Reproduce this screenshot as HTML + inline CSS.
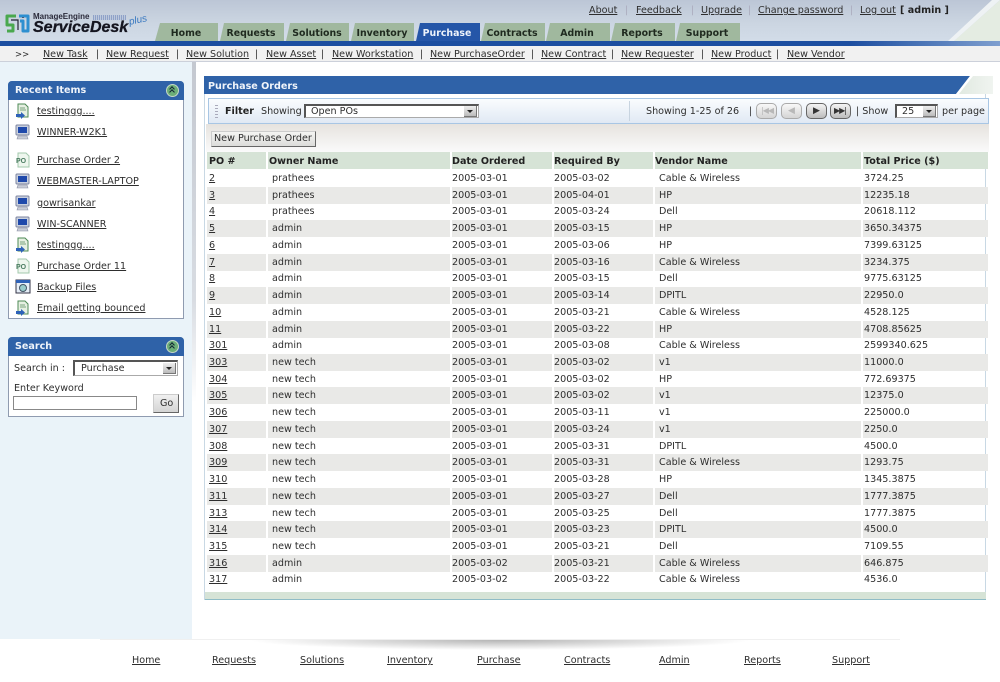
<!DOCTYPE html>
<html><head><meta charset="utf-8"><title>Purchase Orders</title>
<style>
html,body{margin:0;padding:0;background:#fff}
body{position:relative;width:1000px;height:682px;overflow:hidden;font:9.6px/14px "DejaVu Sans","Liberation Sans",sans-serif;color:#2e2e2e}
div,span,a,svg{position:absolute}
.t,a{white-space:nowrap}
a{color:#2e2e2e;text-decoration:underline}
b{font-weight:bold}
.tab{top:34px;transform:translate(-50%,-50%);font-weight:bold;color:#1f2a1f;font-size:9.4px}
.hd{font-weight:bold;color:#f0f4fa}
.r{left:207px;width:781px;height:17px}
.g{background:#e9e9e7}
.r span,.r a{top:2px}
.r a{left:2px}
.r span:nth-of-type(1){left:65px}
.r span:nth-of-type(2){left:245px}
.r span:nth-of-type(3){left:347px}
.r span:nth-of-type(4){left:452px}
.r span:nth-of-type(5){left:657px}
.th{top:155px;font-weight:bold;color:#222}
.sep{top:152px;width:2px;height:436px;background:#fff}
.sel{background:#fff;border:1px solid #aaa;border-top:2px solid #555;border-left:2px solid #555;box-sizing:border-box}
.arr{right:1px;top:1px;width:13px;height:11px;background:linear-gradient(#eee,#bbb);border-right:1px solid #777;border-bottom:1px solid #777;box-sizing:border-box}
.arr:after{content:"";position:absolute;left:3px;top:4px;border:3px solid transparent;border-top:3px solid #222;border-bottom:0}
.pg{top:103px;width:21px;height:16px;border:1px solid #aaa;border-radius:5px;background:linear-gradient(#f8f8f8,#d4d4d4);box-sizing:border-box}
.pg.on{border-color:#666;background:linear-gradient(#f4f4f4,#bcbcbc)}
.col{width:13px;height:13px;border-radius:50%;background:#6cae78;border:1px solid #c6d8c6;box-sizing:border-box}
.col:after{content:"";position:absolute;left:3px;top:2px;width:3px;height:3px;border-top:1px solid #123;border-left:1px solid #123;transform:rotate(45deg)}
.col:before{content:"";position:absolute;left:3px;top:5px;width:3px;height:3px;border-top:1px solid #123;border-left:1px solid #123;transform:rotate(45deg)}
</style></head><body>
<svg width="0" height="0" style="left:0;top:0"><defs>
<g id="tk"><path d="M3 1h7l3 3v10H3z" fill="#e6f0e2" stroke="#4e8a56"/><path d="M5 5h5M5 7h6" stroke="#7aa57e"/><path d="M1 11h5V9l4 3.500-4 3.500v-2H1z" fill="#2e62b8"/></g>
<g id="pc"><rect x="1" y="1" width="13" height="10" rx="1" fill="#c9d0de" stroke="#7e86a0"/><rect x="3" y="3" width="9" height="6" fill="#1f49ab"/><path d="M3 12h9l1 3H2z" fill="#c8ccd6" stroke="#8b90a4" stroke-width=".6"/></g>
<g id="po"><path d="M3 1h8l3 3v11H3z" fill="#eef6ee" stroke="#a3c8ac"/><text x="1" y="11" font-size="7" font-weight="bold" fill="#4d7d63" font-family="Liberation Sans">PO</text></g>
<g id="bk"><rect x="1" y="1" width="14" height="13" fill="#e6eef7" stroke="#334"/><rect x="1" y="1" width="14" height="3" fill="#2e62b8"/><circle cx="8" cy="9" r="3.500" fill="#9cc" stroke="#456"/></g>
</defs></svg>

<!-- header -->
<div style="left:0;top:0;width:1000px;height:41px;background:linear-gradient(#bcc6d6,#ccd6e2 60%,#d2dce8)"></div>
<svg style="left:940px;top:0" width="60" height="41"><polygon points="14,41 60,0 60,41" fill="#e4ece2"/><polygon points="14,41 60,0 52,0 8,41" fill="#eef2f4"/></svg>
<svg style="left:4px;top:13px" width="26" height="22"><path d="M12 3H3v9h6v6H3" fill="none" stroke="#4aa84e" stroke-width="3" stroke-linejoin="round"/><path d="M15 3h9v15h-5V8h-3" fill="none" stroke="#2d8fd0" stroke-width="3" stroke-linejoin="round"/><path d="M7 7h7v10M19 5v-1" stroke="#223" stroke-width="1.200" fill="none"/></svg>
<span class="t" style="left:33px;top:12px;font:bold 8px/10px 'Liberation Sans',sans-serif;color:#2a2a3a">ManageEngine</span>
<div style="left:93px;top:15px;width:33px;height:5px;background:repeating-linear-gradient(90deg,#8fa2c8 0 1px,#bcc8dc 1px 2px)"></div>
<span class="t" style="left:33px;top:20px;font:italic bold 16px/16px 'Liberation Sans',sans-serif;color:#15151f;-webkit-text-stroke:.3px #15151f">ServiceDesk</span>
<span class="t" style="left:129px;top:15px;font:italic 10px/12px 'Liberation Sans',sans-serif;color:#3878c0;transform:rotate(-12deg)">plus</span>

<a style="left:589px;top:4px">About</a><span class="t" style="left:625px;top:4px;color:#aab">|</span>
<a style="left:636px;top:4px">Feedback</a><span class="t" style="left:691px;top:4px;color:#aab">|</span>
<a style="left:701px;top:4px">Upgrade</a><span class="t" style="left:748px;top:4px;color:#aab">|</span>
<a style="left:758px;top:4px">Change password</a><span class="t" style="left:850px;top:4px;color:#aab">|</span>
<a style="left:860px;top:4px">Log out</a><span class="t" style="left:900px;top:4px;font-weight:bold;color:#222">[ admin ]</span>

<!-- tabs -->
<svg style="left:150px;top:22px" width="600" height="20">
<g fill="#a0b89e">
<polygon points="5,19 10,1 68,1 68,19"/><polygon points="70,19 74,1 134,1 134,19"/><polygon points="136,19 140,1 199,1 199,19"/><polygon points="201,19 205,1 264,1 264,19"/>
<polygon points="266,19 270,1 330,1 330,19" fill="#2556a8"/>
<polygon points="331,19 335,1 395,1 395,19"/><polygon points="396,19 400,1 460,1 460,19"/><polygon points="461,19 465,1 525,1 525,19"/><polygon points="526,19 530,1 590,1 590,19"/>
</g></svg>
<span class="t tab" style="left:186px">Home</span>
<span class="t tab" style="left:251px">Requests</span>
<span class="t tab" style="left:317px">Solutions</span>
<span class="t tab" style="left:382px">Inventory</span>
<span class="t tab" style="left:447px;color:#eef3fb">Purchase</span>
<span class="t tab" style="left:512px">Contracts</span>
<span class="t tab" style="left:577px">Admin</span>
<span class="t tab" style="left:642px">Reports</span>
<span class="t tab" style="left:707px">Support</span>

<div style="left:0;top:41px;width:1000px;height:5px;background:linear-gradient(90deg,#1c4ea0 0,#1c4ea0 85%,#7f9fcf)"></div>
<div style="left:0;top:46px;width:1000px;height:16px;background:#f1f1f1;border-bottom:1px solid #ccd0da;box-sizing:border-box"></div>
<span class="t" style="left:15px;top:48px;font-size:8.5px">&gt;&gt;</span>
<a style="left:43px;top:48px">New Task</a><span class="t" style="left:96px;top:48px">|</span>
<a style="left:106px;top:48px">New Request</a><span class="t" style="left:176px;top:48px">|</span>
<a style="left:186px;top:48px">New Solution</a><span class="t" style="left:255px;top:48px">|</span>
<a style="left:266px;top:48px">New Asset</a><span class="t" style="left:321px;top:48px">|</span>
<a style="left:332px;top:48px">New Workstation</a><span class="t" style="left:420px;top:48px">|</span>
<a style="left:430px;top:48px">New PurchaseOrder</a><span class="t" style="left:531px;top:48px">|</span>
<a style="left:541px;top:48px">New Contract</a><span class="t" style="left:611px;top:48px">|</span>
<a style="left:621px;top:48px">New Requester</a><span class="t" style="left:701px;top:48px">|</span>
<a style="left:711px;top:48px">New Product</a><span class="t" style="left:776px;top:48px">|</span>
<a style="left:787px;top:48px">New Vendor</a>

<!-- sidebar -->
<div style="left:0;top:62px;width:192px;height:577px;background:#eaf3f9"></div>
<div style="left:192px;top:62px;width:4px;height:340px;background:linear-gradient(#c4c8d0,#d8dce2 70%,#fff)"></div>

<div style="left:8px;top:81px;width:176px;height:238px;background:#fff;border:1px solid #8f9bb0;box-sizing:border-box;border-radius:4px 4px 0 0"></div>
<div style="left:8px;top:81px;width:176px;height:19px;background:#2f62a8;border-radius:4px 4px 0 0"></div>
<span class="t hd" style="left:15px;top:84px">Recent Items</span>
<div class="col" style="left:166px;top:84px"></div>
<svg style="left:15px;top:103px" width="16" height="17"><use href="#tk"/></svg><a style="left:37px;top:105px">testinggg....</a>
<svg style="left:15px;top:124px" width="16" height="17"><use href="#pc"/></svg><a style="left:37px;top:126px">WINNER-W2K1</a>
<svg style="left:15px;top:152px" width="16" height="17"><use href="#po"/></svg><a style="left:37px;top:154px">Purchase Order 2</a>
<svg style="left:15px;top:173px" width="16" height="17"><use href="#pc"/></svg><a style="left:37px;top:175px">WEBMASTER-LAPTOP</a>
<svg style="left:15px;top:195px" width="16" height="17"><use href="#pc"/></svg><a style="left:37px;top:197px">gowrisankar</a>
<svg style="left:15px;top:216px" width="16" height="17"><use href="#pc"/></svg><a style="left:37px;top:218px">WIN-SCANNER</a>
<svg style="left:15px;top:237px" width="16" height="17"><use href="#tk"/></svg><a style="left:37px;top:239px">testinggg....</a>
<svg style="left:15px;top:258px" width="16" height="17"><use href="#po"/></svg><a style="left:37px;top:260px">Purchase Order 11</a>
<svg style="left:15px;top:279px" width="16" height="17"><use href="#bk"/></svg><a style="left:37px;top:281px">Backup Files</a>
<svg style="left:15px;top:300px" width="16" height="17"><use href="#tk"/></svg><a style="left:37px;top:302px">Email getting bounced</a>

<div style="left:8px;top:337px;width:176px;height:80px;background:#fff;border:1px solid #8f9bb0;box-sizing:border-box;border-radius:4px 4px 0 0"></div>
<div style="left:8px;top:337px;width:176px;height:19px;background:#2f62a8;border-radius:4px 4px 0 0"></div>
<span class="t hd" style="left:15px;top:340px">Search</span>
<div class="col" style="left:166px;top:340px"></div>
<span class="t" style="left:14px;top:362px">Search in :</span>
<div class="sel" style="left:73px;top:360px;width:105px;height:16px"><span class="t" style="left:6px;top:0">Purchase</span><div class="arr"></div></div>
<span class="t" style="left:14px;top:382px">Enter Keyword</span>
<div style="left:13px;top:396px;width:124px;height:14px;background:#fff;border:1px solid #888;box-sizing:border-box"></div>
<div style="left:153px;top:394px;width:26px;height:19px;background:linear-gradient(#f0f0f0,#d4d4d4);border:1px solid #ccc;border-right-color:#666;border-bottom-color:#666;box-sizing:border-box"><span class="t" style="left:6px;top:2px">Go</span></div>

<!-- main panel -->
<div style="left:204px;top:76px;width:782px;height:524px;background:#fff;border:1px solid #c8d8e4;border-top:0;box-sizing:border-box"></div>
<div style="left:955px;top:76px;width:38px;height:18px;background:linear-gradient(90deg,#dfe8df,#f0f4f0)"></div>
<svg style="left:204px;top:76px" width="790" height="19"><polygon points="0,0 766,0 752,18 0,18" fill="#2f62a8"/><polygon points="766,0 752,18 755,18 769,0" fill="#fff"/></svg>
<span class="t hd" style="left:208px;top:80px">Purchase Orders</span>
<div style="left:208px;top:98px;width:781px;height:26px;background:linear-gradient(#fafcfe,#e0e9f4);border:1px solid #a8c6e4;box-sizing:border-box"></div>
<div style="left:215px;top:105px;width:3px;height:13px;background:repeating-linear-gradient(#aab 0 1px,transparent 1px 3px)"></div>
<span class="t" style="left:225px;top:105px;font-weight:bold;color:#222">Filter</span>
<span class="t" style="left:261px;top:105px">Showing</span>
<div class="sel" style="left:304px;top:104px;width:175px;height:14px"><span class="t" style="left:5px;top:-1px">Open POs</span><div class="arr" style="top:0"></div></div>
<div style="left:629px;top:101px;width:1px;height:20px;background:#c8d4e0"></div>
<span class="t" style="left:646px;top:105px">Showing 1-25 of 26</span>
<span class="t" style="left:749px;top:105px">|</span>
<div class="pg" style="left:756px"><span class="t" style="left:4px;top:0;font-size:8px;color:#b8b8b8;letter-spacing:-1px">|◀◀</span></div>
<div class="pg" style="left:781px"><span class="t" style="left:6px;top:0;font-size:9px;color:#b8b8b8">◀</span></div>
<div class="pg on" style="left:806px"><span class="t" style="left:6px;top:0;font-size:9px;color:#333">▶</span></div>
<div class="pg on" style="left:830px"><span class="t" style="left:3px;top:0;font-size:8px;color:#333;letter-spacing:-1px">▶▶|</span></div>
<span class="t" style="left:856px;top:105px">| Show</span>
<div class="sel" style="left:895px;top:104px;width:43px;height:14px"><span class="t" style="left:5px;top:-1px">25</span><div class="arr" style="top:0"></div></div>
<span class="t" style="left:942px;top:105px">per page</span>
<div style="left:206px;top:124px;width:783px;height:28px;background:linear-gradient(#e6e3de,#fafafa)"></div>
<div style="left:211px;top:131px;width:105px;height:16px;background:linear-gradient(#f4f4f2,#dcdcda);border:1px solid #ccc;border-right-color:#666;border-bottom-color:#666;box-sizing:border-box"><span class="t" style="left:2px;top:0">New Purchase Order</span></div>

<div style="left:207px;top:152px;width:781px;height:17px;background:#d6e3d6"></div>
<span class="t th" style="left:209px">PO #</span>
<span class="t th" style="left:269px">Owner Name</span>
<span class="t th" style="left:452px">Date Ordered</span>
<span class="t th" style="left:554px">Required By</span>
<span class="t th" style="left:655px">Vendor Name</span>
<span class="t th" style="left:864px">Total Price ($)</span>

<div class="r" style="top:170px"><a>2</a><span>prathees</span><span>2005-03-01</span><span>2005-03-02</span><span>Cable &amp; Wireless</span><span>3724.25</span></div>
<div class="r g" style="top:187px"><a>3</a><span>prathees</span><span>2005-03-01</span><span>2005-04-01</span><span>HP</span><span>12235.18</span></div>
<div class="r" style="top:203px"><a>4</a><span>prathees</span><span>2005-03-01</span><span>2005-03-24</span><span>Dell</span><span>20618.112</span></div>
<div class="r g" style="top:220px"><a>5</a><span>admin</span><span>2005-03-01</span><span>2005-03-15</span><span>HP</span><span>3650.34375</span></div>
<div class="r" style="top:237px"><a>6</a><span>admin</span><span>2005-03-01</span><span>2005-03-06</span><span>HP</span><span>7399.63125</span></div>
<div class="r g" style="top:254px"><a>7</a><span>admin</span><span>2005-03-01</span><span>2005-03-16</span><span>Cable &amp; Wireless</span><span>3234.375</span></div>
<div class="r" style="top:270px"><a>8</a><span>admin</span><span>2005-03-01</span><span>2005-03-15</span><span>Dell</span><span>9775.63125</span></div>
<div class="r g" style="top:287px"><a>9</a><span>admin</span><span>2005-03-01</span><span>2005-03-14</span><span>DPITL</span><span>22950.0</span></div>
<div class="r" style="top:304px"><a>10</a><span>admin</span><span>2005-03-01</span><span>2005-03-21</span><span>Cable &amp; Wireless</span><span>4528.125</span></div>
<div class="r g" style="top:321px"><a>11</a><span>admin</span><span>2005-03-01</span><span>2005-03-22</span><span>HP</span><span>4708.85625</span></div>
<div class="r" style="top:337px"><a>301</a><span>admin</span><span>2005-03-01</span><span>2005-03-08</span><span>Cable &amp; Wireless</span><span>2599340.625</span></div>
<div class="r g" style="top:354px"><a>303</a><span>new tech</span><span>2005-03-01</span><span>2005-03-02</span><span>v1</span><span>11000.0</span></div>
<div class="r" style="top:371px"><a>304</a><span>new tech</span><span>2005-03-01</span><span>2005-03-02</span><span>HP</span><span>772.69375</span></div>
<div class="r g" style="top:387px"><a>305</a><span>new tech</span><span>2005-03-01</span><span>2005-03-02</span><span>v1</span><span>12375.0</span></div>
<div class="r" style="top:404px"><a>306</a><span>new tech</span><span>2005-03-01</span><span>2005-03-11</span><span>v1</span><span>225000.0</span></div>
<div class="r g" style="top:421px"><a>307</a><span>new tech</span><span>2005-03-01</span><span>2005-03-24</span><span>v1</span><span>2250.0</span></div>
<div class="r" style="top:438px"><a>308</a><span>new tech</span><span>2005-03-01</span><span>2005-03-31</span><span>DPITL</span><span>4500.0</span></div>
<div class="r g" style="top:454px"><a>309</a><span>new tech</span><span>2005-03-01</span><span>2005-03-31</span><span>Cable &amp; Wireless</span><span>1293.75</span></div>
<div class="r" style="top:471px"><a>310</a><span>new tech</span><span>2005-03-01</span><span>2005-03-28</span><span>HP</span><span>1345.3875</span></div>
<div class="r g" style="top:488px"><a>311</a><span>new tech</span><span>2005-03-01</span><span>2005-03-27</span><span>Dell</span><span>1777.3875</span></div>
<div class="r" style="top:505px"><a>313</a><span>new tech</span><span>2005-03-01</span><span>2005-03-25</span><span>Dell</span><span>1777.3875</span></div>
<div class="r g" style="top:521px"><a>314</a><span>new tech</span><span>2005-03-01</span><span>2005-03-23</span><span>DPITL</span><span>4500.0</span></div>
<div class="r" style="top:538px"><a>315</a><span>new tech</span><span>2005-03-01</span><span>2005-03-21</span><span>Dell</span><span>7109.55</span></div>
<div class="r g" style="top:555px"><a>316</a><span>admin</span><span>2005-03-02</span><span>2005-03-21</span><span>Cable &amp; Wireless</span><span>646.875</span></div>
<div class="r" style="top:571px"><a>317</a><span>admin</span><span>2005-03-02</span><span>2005-03-22</span><span>Cable &amp; Wireless</span><span>4536.0</span></div>

<div class="sep" style="left:266px"></div><div class="sep" style="left:450px"></div><div class="sep" style="left:552px"></div><div class="sep" style="left:653px"></div><div class="sep" style="left:861px"></div>

<div style="left:205px;top:592px;width:781px;height:8px;background:#d6e3d6;border-bottom:1px solid #8fbcc6;box-sizing:border-box"></div>

<!-- footer -->
<div style="left:100px;top:639px;width:800px;height:1px;background:#f0f0f0"></div>
<div style="left:250px;top:640px;width:500px;height:10px;background:radial-gradient(ellipse 50% 100% at 50% 0,#b4b4b4,rgba(255,255,255,0) 100%)"></div>
<a style="left:132px;top:654px">Home</a>
<a style="left:212px;top:654px">Requests</a>
<a style="left:300px;top:654px">Solutions</a>
<a style="left:387px;top:654px">Inventory</a>
<a style="left:477px;top:654px">Purchase</a>
<a style="left:564px;top:654px">Contracts</a>
<a style="left:659px;top:654px">Admin</a>
<a style="left:744px;top:654px">Reports</a>
<a style="left:832px;top:654px">Support</a>
</body></html>
